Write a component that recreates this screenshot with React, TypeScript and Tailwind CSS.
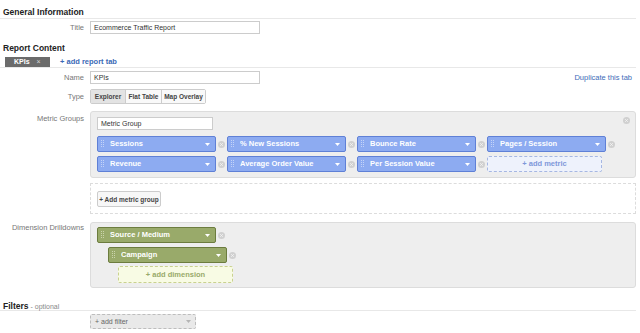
import { FC, ReactNode } from "react";

const Grip: FC<{ color: string }> = ({ color }) => (
  <svg width="3" height="8" viewBox="0 0 3 8" className="shrink-0">
    {[0, 2, 4, 6].map((y) => (
      <g key={y}>
        <rect x="0" y={y} width="1" height="1" fill={color} />
        <rect x="2" y={y} width="1" height="1" fill={color} />
      </g>
    ))}
  </svg>
);

const Caret: FC<{ color?: string }> = ({ color = "#ffffff" }) => (
  <svg width="5" height="3" viewBox="0 0 5 3" className="shrink-0">
    <path d="M0 0 L5 0 L2.5 3 Z" fill={color} />
  </svg>
);

const RemoveDot: FC = () => (
  <div className="flex h-[11px] w-[11px] shrink-0 items-center justify-center">
    <svg width="7" height="7" viewBox="0 0 7 7">
      <circle cx="3.5" cy="3.5" r="3.5" fill="#d0d0d0" />
      <path d="M2.2 2.2 L4.8 4.8 M4.8 2.2 L2.2 4.8" stroke="#f4f4f4" strokeWidth="0.9" />
    </svg>
  </div>
);

type ChipProps = { label: string; tone: "blue" | "green" };

const Chip: FC<ChipProps> = ({ label, tone }) => {
  const blue = tone === "blue";
  return (
    <div
      className={
        blue
          ? "flex h-[16px] w-[119px] items-center rounded-[2px] border border-[#5f80d6] bg-[#8dabf1] pl-[3px] pr-[5px]"
          : "flex h-[16px] w-[119px] items-center rounded-[2px] border border-[#6c7c3e] bg-[#99aa6a] pl-[3px] pr-[5px]"
      }
    >
      <Grip color={blue ? "#c4d3f8" : "#cbd4ad"} />
      <span className="ml-[6px] flex-1 truncate whitespace-nowrap text-[7.5px] font-bold leading-[10px] text-white">
        {label}
      </span>
      <Caret />
    </div>
  );
};

const Label: FC<{ children: ReactNode; className?: string }> = ({
  children,
  className,
}) => (
  <div
    className={`w-[84px] shrink-0 whitespace-nowrap text-right text-[7.5px] leading-[10px] text-[#777] ${className ?? ""}`}
  >
    {children}
  </div>
);

const Heading: FC<{ children: ReactNode }> = ({ children }) => (
  <div className="h-[10px] whitespace-nowrap px-[3px] text-[8.5px] font-bold leading-[10px] text-[#222]">
    {children}
  </div>
);

const Rule: FC = () => <div className="mt-[1px] mr-[4px] h-px bg-[#e8e8e8]" />;

const TextBox: FC<{ value: string; className?: string }> = ({
  value,
  className,
}) => (
  <div
    className={`flex items-center whitespace-nowrap border border-[#cccccc] bg-white px-[3px] text-[7px] leading-[9px] text-[#333] ${className ?? ""}`}
  >
    {value}
  </div>
);

export default function App() {
  const metricRows = [
    ["Sessions", "% New Sessions", "Bounce Rate", "Pages / Session"],
    ["Revenue", "Average Order Value", "Per Session Value"],
  ];

  return (
    <div
      className="h-[333px] w-[640px] overflow-hidden bg-white pt-[7px] text-[#333]"
      style={{ fontFamily: '"Liberation Sans", Arial, sans-serif' }}
    >
      <Heading>General Information</Heading>
      <Rule />
      <div className="mt-[2px] flex items-center">
        <Label>Title</Label>
        <TextBox value="Ecommerce Traffic Report" className="ml-[6px] h-[13px] w-[170px]" />
      </div>

      <div className="mt-[9px]">
        <Heading>Report Content</Heading>
      </div>
      <div className="mt-[4px] flex h-[10px] items-center px-[5px]">
        <div className="flex h-[10px] w-[45px] items-center bg-[#6b6b6b] pl-[9px] text-[7px] font-bold leading-[10px] text-white">
          KPIs
          <span className="ml-[7px] font-normal text-[#d6d6d6]">×</span>
        </div>
        <span className="ml-[10px] whitespace-nowrap text-[7.5px] font-bold leading-[10px] text-[#3a69b6]">
          + add report tab
        </span>
      </div>
      <div className="mr-[4px] h-px bg-[#e8e8e8]" />

      <div className="mt-[3px] flex h-[13px] items-center">
        <Label>Name</Label>
        <TextBox value="KPIs" className="ml-[6px] h-[13px] w-[170px]" />
        <span className="ml-auto mr-[8px] whitespace-nowrap text-[7.5px] leading-[10px] text-[#3d6cb8]">
          Duplicate this tab
        </span>
      </div>

      <div className="mt-[5px] flex items-center">
        <Label>Type</Label>
        <div className="ml-[6px] flex h-[15px] rounded-[2px] border border-[#cccccc] text-[6.5px] font-bold leading-[9px] text-[#444]">
          <div className="flex w-[34px] items-center justify-center whitespace-nowrap bg-[#e3e3e3]">
            Explorer
          </div>
          <div className="flex w-[36px] items-center justify-center whitespace-nowrap border-l border-[#cccccc] bg-[#f9f9f9]">
            Flat Table
          </div>
          <div className="flex w-[44px] items-center justify-center whitespace-nowrap border-l border-[#cccccc] bg-[#f9f9f9]">
            Map Overlay
          </div>
        </div>
      </div>

      <div className="mt-[7px] flex">
        <Label className="pt-[3px]">Metric Groups</Label>
        <div className="ml-[6px] mr-[4px] flex flex-1 flex-col">
          <div className="relative h-[67px] rounded-[3px] border border-[#dcdcdc] bg-[#eeeeee] px-[6px] pt-[5px]">
            <TextBox value="Metric Group" className="h-[13px] w-[116px]" />
            <div className="absolute right-[3px] top-[3px]">
              <RemoveDot />
            </div>
            <div className="mt-[6px] flex flex-col gap-[4px]">
              {metricRows.map((row, i) => (
                <div key={i} className="flex items-center">
                  {row.map((m) => (
                    <div key={m} className="flex items-center">
                      <Chip label={m} tone="blue" />
                      <RemoveDot />
                    </div>
                  ))}
                  {i === 1 && (
                    <div className="flex h-[16px] w-[115px] items-center justify-center whitespace-nowrap rounded-[2px] border border-dashed border-[#a6b7e2] bg-[#eef2fc] text-[7.5px] font-bold leading-[10px] text-[#7f98da]">
                      + add metric
                    </div>
                  )}
                </div>
              ))}
            </div>
          </div>
          <div className="mt-[5px] h-[31px] border border-dashed border-[#dcdcdc] px-[6px] pt-[7px]">
            <div className="flex h-[16px] w-[64px] items-center justify-center whitespace-nowrap rounded-[2px] border border-[#cccccc] bg-[#f7f7f7] text-[6.5px] font-bold leading-[9px] text-[#444]">
              + Add metric group
            </div>
          </div>
        </div>
      </div>

      <div className="mt-[8px] flex">
        <Label className="pt-[1px]">Dimension Drilldowns</Label>
        <div className="ml-[6px] mr-[4px] h-[66px] flex-1 rounded-[3px] border border-[#dcdcdc] bg-[#eeeeee] px-[6px] pt-[4px]">
          <div className="flex items-center">
            <Chip label="Source / Medium" tone="green" />
            <RemoveDot />
          </div>
          <div className="ml-[11px] mt-[4px] flex items-center">
            <Chip label="Campaign" tone="green" />
            <RemoveDot />
          </div>
          <div className="ml-[21px] mt-[3px] flex h-[17px] w-[115px] items-center justify-center whitespace-nowrap rounded-[2px] border border-dashed border-[#c9d18f] bg-[#f8fbe4] text-[7.5px] font-bold leading-[10px] text-[#99aa6a]">
            + add dimension
          </div>
        </div>
      </div>

      <div className="mt-[11px] h-[10px] whitespace-nowrap px-[3px] leading-[10px]">
        <span className="text-[8.5px] font-bold text-[#222]">Filters</span>
        <span className="text-[7px] text-[#888]"> - optional</span>
      </div>
      <Rule />
      <div className="ml-[90px] mt-[3px] flex h-[15px] w-[106px] items-center rounded-[2px] border border-dashed border-[#bdbdbd] bg-[#e9e9e9] px-[4px] text-[7px] leading-[9px] text-[#666]">
        <span className="whitespace-nowrap">+ add filter</span>
        <span className="ml-auto">
          <Caret color="#b5b5b5" />
        </span>
      </div>
    </div>
  );
}
